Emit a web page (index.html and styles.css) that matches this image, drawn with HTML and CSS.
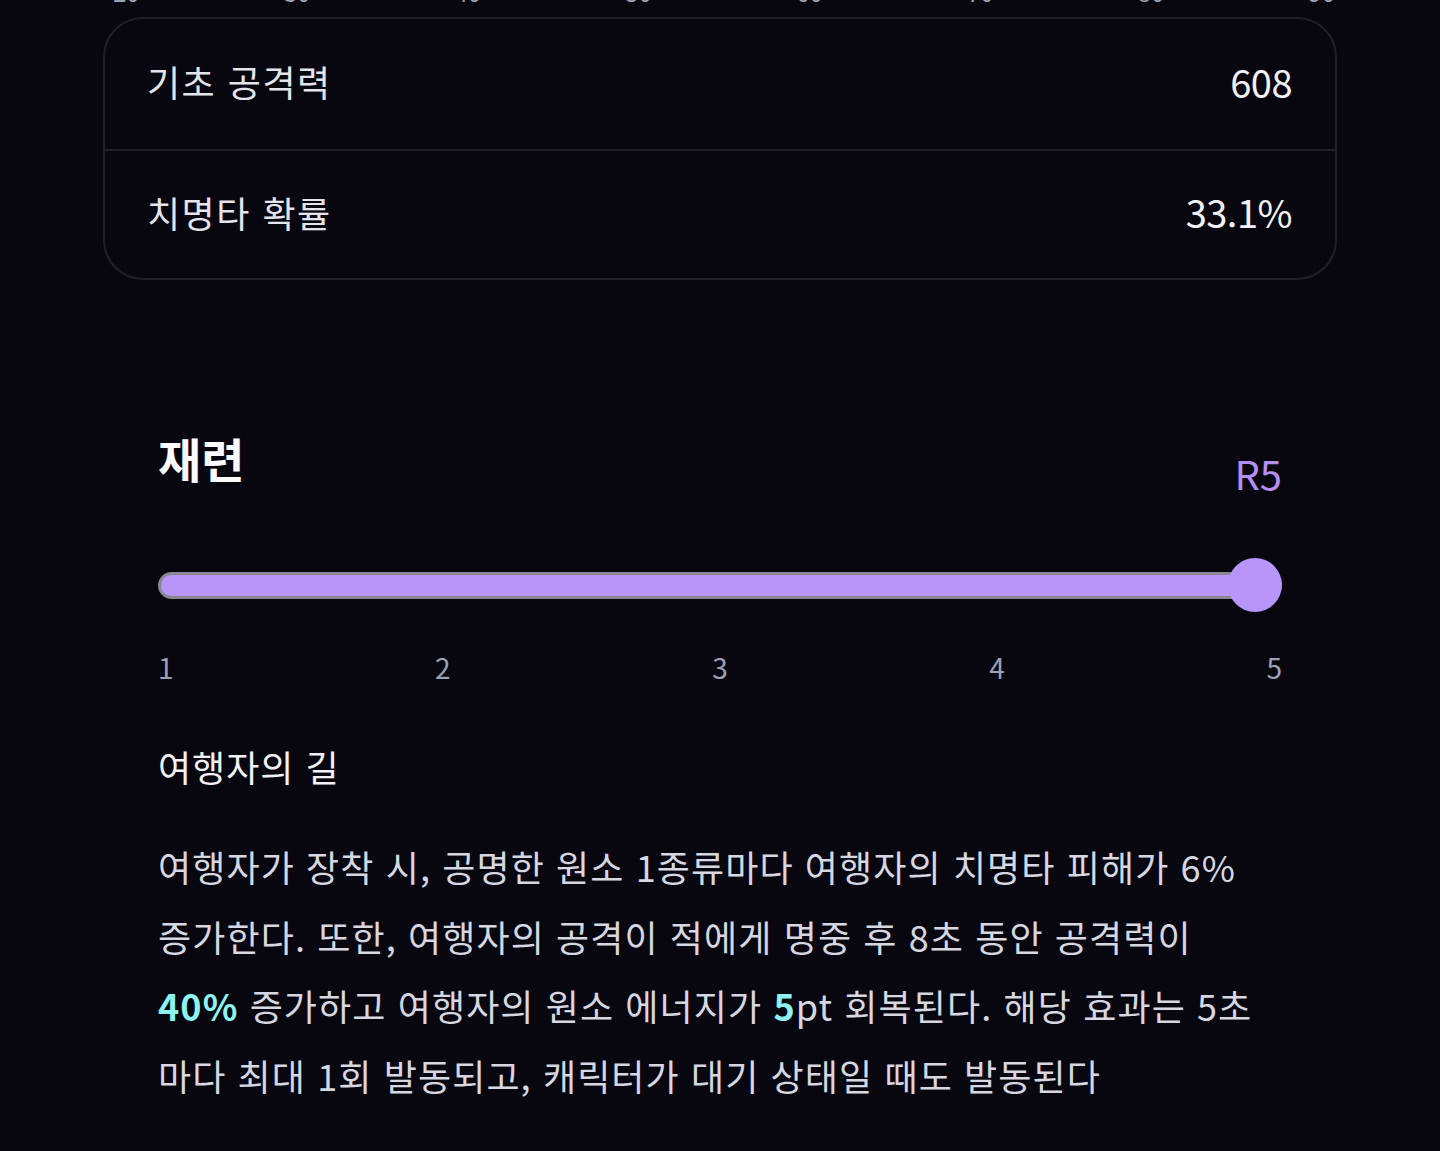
FILE: index.html
```html
<!DOCTYPE html>
<html lang="ko">
<head>
    <meta charset="UTF-8">
    <meta name="viewport" content="width=device-width, initial-scale=1.0">
    <title>무기 상세</title>
    <link rel="stylesheet" href="styles.css">
</head>
<body>
    <div class="page">
        <div class="axis">
            <span>20</span><span>30</span><span>40</span><span>50</span>
            <span>60</span><span>70</span><span>80</span><span>90</span>
        </div>

        <div class="stats">
            <div class="stat-row">
                <span class="stat-name">기초 공격력</span>
                <span class="stat-value">608</span>
            </div>
            <div class="stat-row">
                <span class="stat-name">치명타 확률</span>
                <span class="stat-value">33.1%</span>
            </div>
        </div>

        <section class="refine">
            <div class="refine-head">
                <h2>재련</h2>
                <span class="rank">R5</span>
            </div>

            <div class="slider">
                <div class="track"></div>
                <div class="thumb"></div>
            </div>
            <div class="ticks">
                <span>1</span><span>2</span><span>3</span><span>4</span><span>5</span>
            </div>

            <h3>여행자의 길</h3>
            <p class="desc">여행자가 장착 시, 공명한 원소 1종류마다 여행자의 치명타 피해가 6%<br>증가한다. 또한, 여행자의 공격이 적에게 명중 후 8초 동안 공격력이<br><b>40%</b> 증가하고 여행자의 원소 에너지가 <b>5</b>pt 회복된다. 해당 효과는 5초<br>마다 최대 1회 발동되고, 캐릭터가 대기 상태일 때도 발동된다</p>
        </section>
    </div>
</body>
</html>
```

FILE: styles.css
```css
* {
    margin: 0;
    padding: 0;
    box-sizing: border-box;
}

body {
    font-family: 'Noto Sans CJK KR', 'Noto Sans', sans-serif;
    background-color: #08060f;
    color: #e4e4ec;
}

.page {
    padding: 0 103px;
    overflow: hidden;
    height: 1151px;
}

.axis {
    display: flex;
    justify-content: space-between;
    margin-top: -23px;
    padding: 0 2px 0 10px;
    height: 30px;
    line-height: 30px;
    font-size: 24px;
    color: #9ca1b5;
}

.stats {
    margin-top: 10px;
    border: 2px solid #211f29;
    border-radius: 40px;
}

.stat-row {
    display: flex;
    justify-content: space-between;
    align-items: center;
    height: 130px;
    padding: 0 43px 6px 42px;
    font-size: 36px;
}

.stat-row + .stat-row {
    border-top: 2px solid #211f29;
    height: 129px;
}

.stat-name {
    letter-spacing: 1.5px;
}

.stat-value {
    font-size: 38px;
    letter-spacing: -0.5px;
    color: #f2f2f6;
}

.refine {
    padding: 0 55px;
    margin-top: 150px;
}

.refine-head {
    display: flex;
    justify-content: space-between;
    align-items: flex-end;
}

.refine-head h2 {
    font-size: 47px;
    font-weight: 700;
    line-height: 1.2;
    color: #fafafc;
}

.rank {
    font-size: 40px;
    line-height: 1.2;
    color: #b48ef0;
    margin-bottom: -11px;
}

.slider {
    position: relative;
    height: 54px;
    margin-top: 72px;
    display: flex;
    align-items: center;
}

.track {
    width: 100%;
    height: 27px;
    background-color: #b895f8;
    border: 3px solid #8a8792;
    border-radius: 14px;
}

.thumb {
    position: absolute;
    right: 0;
    top: 0;
    width: 54px;
    height: 54px;
    border-radius: 50%;
    background-color: #b895f8;
}

.ticks {
    display: flex;
    justify-content: space-between;
    margin-top: 39px;
    font-size: 28px;
    line-height: 1.2;
    color: #9ca1b5;
}

.refine h3 {
    margin-top: 60px;
    font-size: 36px;
    font-weight: 400;
    line-height: 1.2;
    letter-spacing: 1px;
    color: #f2f2f6;
}

.desc {
    margin-top: 44px;
    font-size: 36px;
    line-height: 69.5px;
    letter-spacing: 1.1px;
    color: #d6d7e1;
}

.desc b {
    color: #8ef3f0;
    font-weight: 700;
}
```
